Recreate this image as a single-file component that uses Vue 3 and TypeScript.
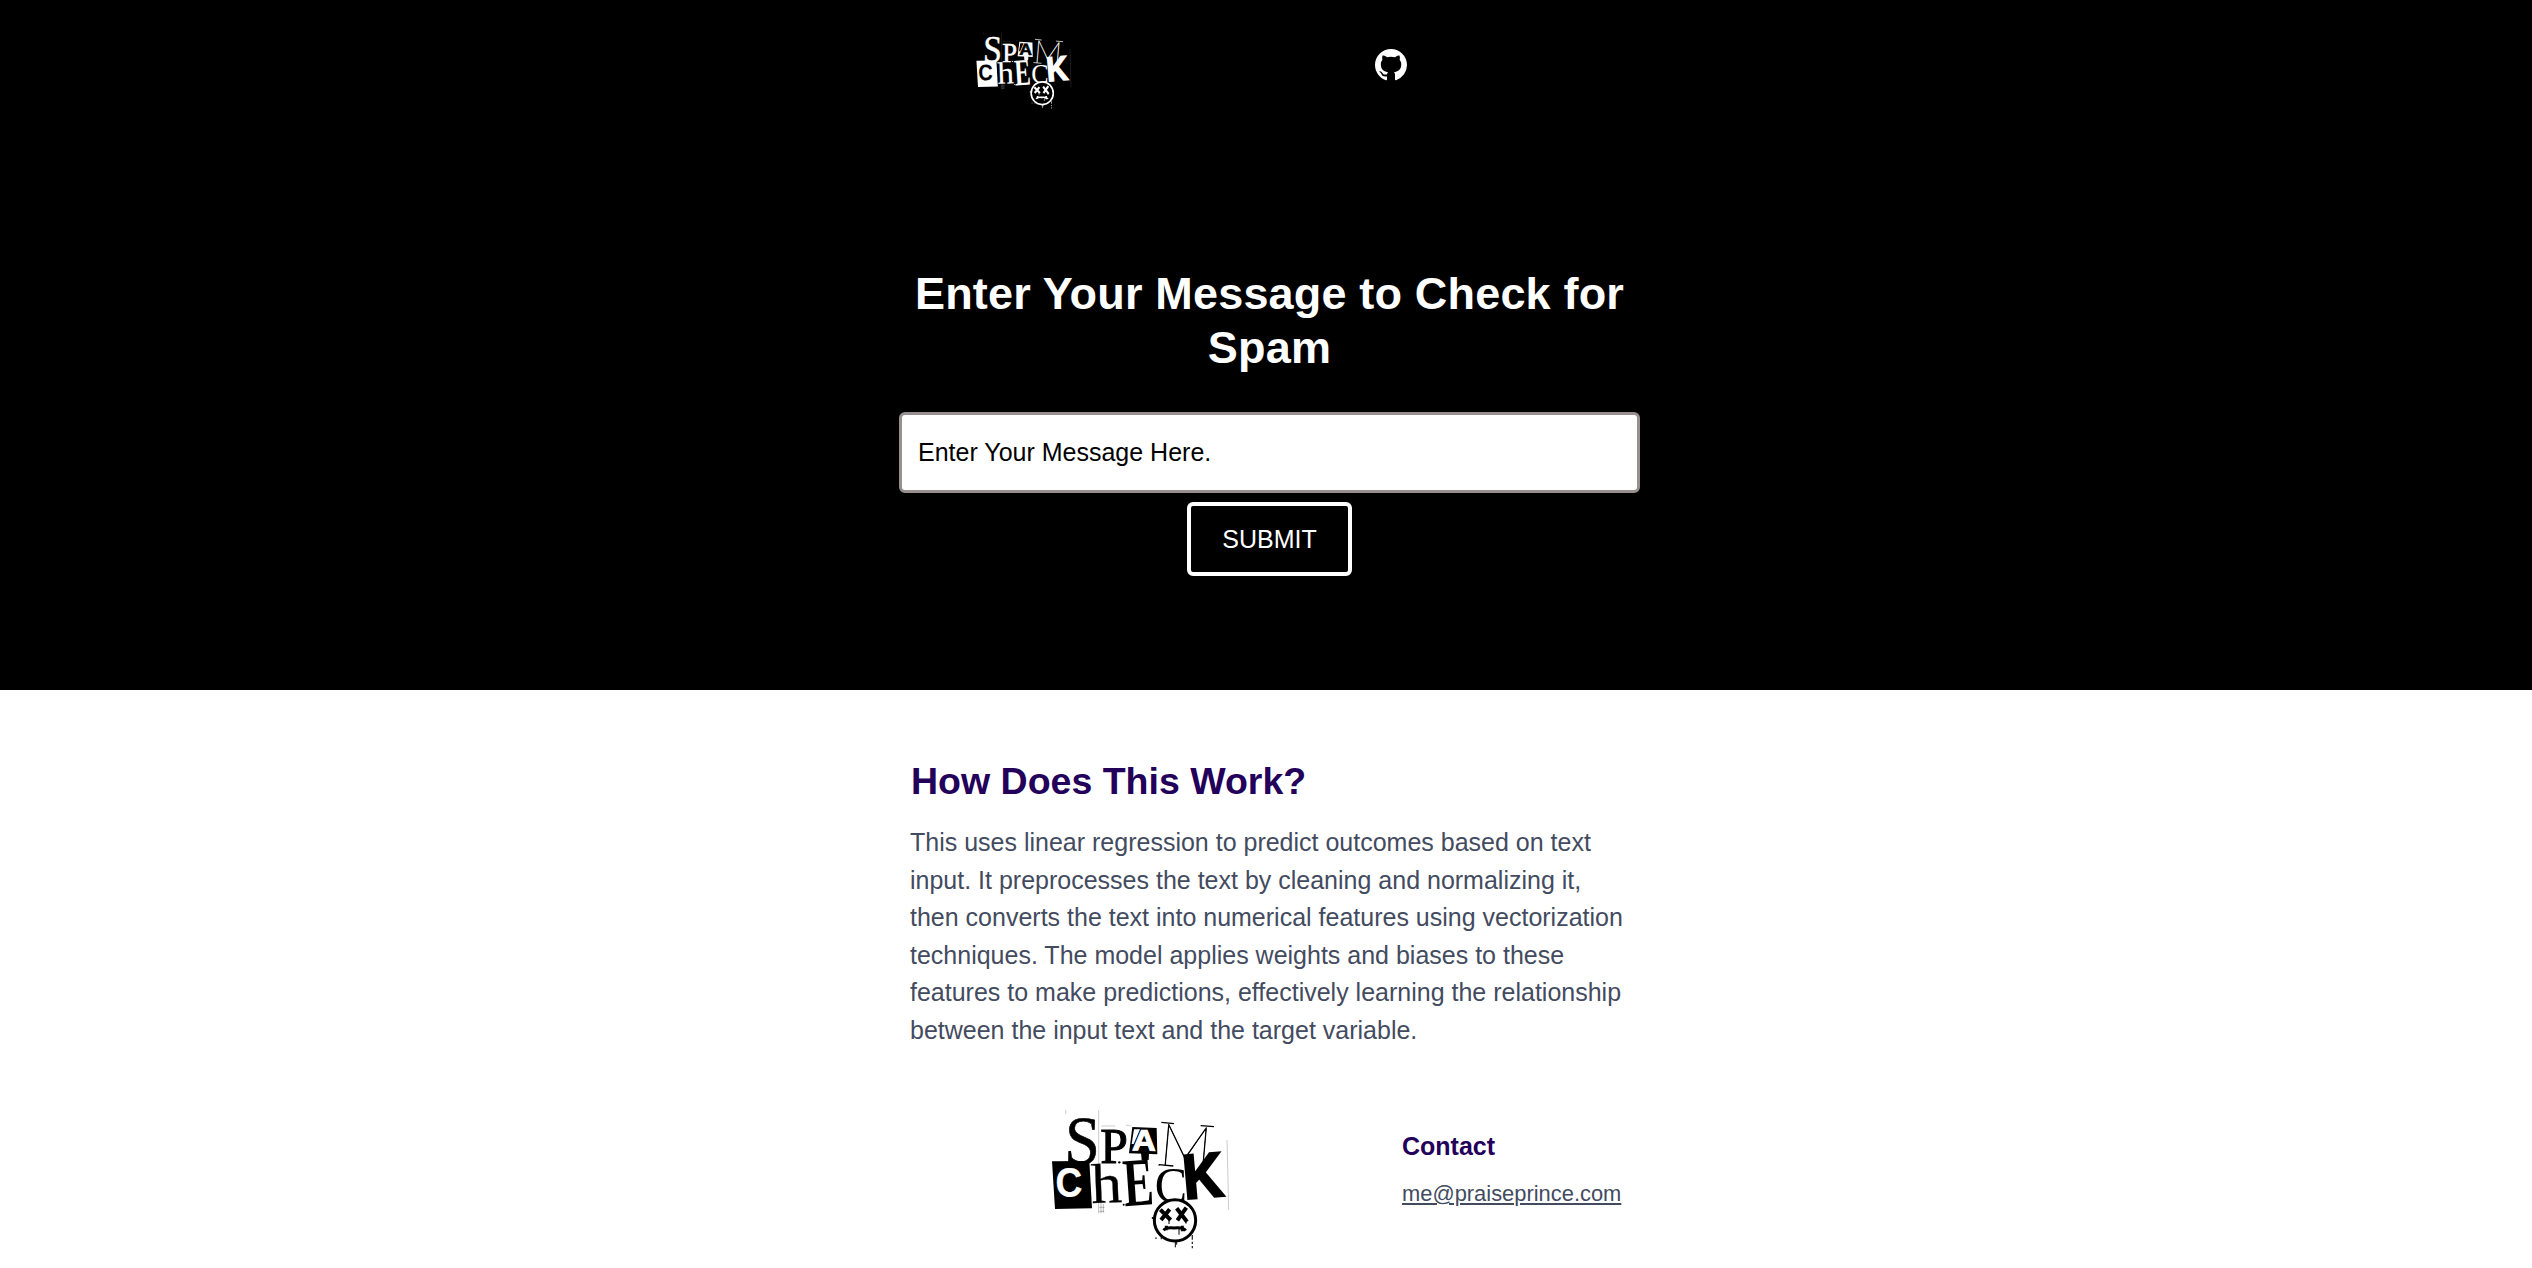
<script setup lang="ts">
import { defineComponent, h, ref } from 'vue'

interface Letter {
  char: string
  font: 'serif' | 'sans' | 'thin'
  size: number
  transform: string
  weight?: number
  tone?: 'ink' | 'paper'
  stroke?: number
}

const families: Record<Letter['font'], string> = {
  serif: 'Liberation Serif, serif',
  sans: 'Liberation Sans, sans-serif',
  thin: 'Lato, sans-serif',
}

const letters: Letter[] = [
  { char: 'S', font: 'serif', size: 207, transform: 'translate(72 190) rotate(2) scale(.92 1)', stroke: 2 },
  { char: 'P', font: 'serif', size: 152, transform: 'translate(181 190) scale(.98 1)', stroke: 3 },
  { char: 'M', font: 'thin', size: 174, transform: 'translate(355 193) rotate(5)', weight: 100, stroke: 2 },
  { char: 'h', font: 'serif', size: 168, transform: 'translate(155 309) rotate(-2) scale(1.1 1)', stroke: 1 },
  { char: 'E', font: 'serif', size: 205, transform: 'translate(254 319) rotate(-4) scale(.66 1)', weight: 700 },
  { char: 'C', font: 'serif', size: 150, transform: 'translate(344 306) scale(.97 1)' },
]

// Cut-out lettering and graffiti face; --ink and --paper set its two tones.
const SpamLogo = defineComponent({
  setup() {
    const glyph = (l: Letter) =>
      h('text', {
        transform: l.transform,
        'font-family': families[l.font],
        'font-size': l.size,
        'font-weight': l.weight ?? 400,
        fill: `var(--${l.tone ?? 'ink'})`,
        stroke: `var(--${l.tone ?? 'ink'})`,
        'stroke-width': l.stroke ?? 0,
      }, l.char)
    const line = (d: string, w: number, opacity = 1) =>
      h('path', { d, fill: 'none', stroke: 'var(--ink)', 'stroke-width': w, opacity })
    const block = (points: string) => h('polygon', { points, fill: 'var(--ink)' })
    return () =>
      h('svg', { viewBox: '0 0 600 480', preserveAspectRatio: 'none', role: 'img', 'aria-label': 'Spam Check' }, [
        line('M176 30V200M77 30V42M184 78H226M258 76H272M561 120L564 240L566 330', 1.5, 0.4),
        line('M176 306V340M183 308V340M190 312V338M178 322H194M178 334H193', 2, 0.4),
        ...letters.map(glyph),
        line('M364 67L402 71M482 77L522 80M357 194L400 198', 4),
        block('36,184 148,183 156,325 45,327'),
        glyph({ char: 'C', font: 'sans', size: 122, weight: 700, tone: 'paper', transform: 'translate(47 290) rotate(-1) scale(.91 1)', stroke: 1 }),
        block('277,81 350,84 352,163 267,160'),
        h('polygon', { points: '282,88 300,88 281,132 275,132', fill: 'var(--paper)' }),
        glyph({ char: 'A', font: 'sans', size: 88, weight: 700, tone: 'paper', transform: 'translate(276 151) rotate(1) scale(1.12 1)', stroke: 3 }),
        block('303,158 327,160 326,180 305,180'),
        glyph({ char: 'K', font: 'sans', size: 188, weight: 700, transform: 'translate(434 297) rotate(-5) scale(.88 1)', stroke: 8 }),
        h('circle', { cx: 405, cy: 361, r: 62, fill: 'var(--paper)', stroke: 'var(--ink)', 'stroke-width': 9 }),
        line('M361 329L392 360M389 328L363 360M410 325L441 365M439 323L412 361', 12),
        line('M371 391Q378 381 402 384Q430 381 437 392M379 377V391M427 377V394', 9),
        line('M417 387V404M406 424V442M410 424V434M387 360V372M438 362V371', 3),
        line('M457 405V419M457 425V432M457 438V445M348 412V417M364 410V418', 4, 0.8),
        h('g', { fill: 'var(--ink)' }, [
          h('circle', { cx: 238, cy: 187, r: 3.5 }),
          h('circle', { cx: 251, cy: 314, r: 3 }),
          h('circle', { cx: 338, cy: 354, r: 3 }),
          h('circle', { cx: 357, cy: 195, r: 2 }),
        ]),
      ])
  },
})

const message = ref('')
const explanation: string[] = [
  'This uses linear regression to predict outcomes based on text',
  'input. It preprocesses the text by cleaning and normalizing it,',
  'then converts the text into numerical features using vectorization',
  'techniques. The model applies weights and biases to these',
  'features to make predictions, effectively learning the relationship',
  'between the input text and the target variable.',
]
</script>

<template>
  <div class="page">
    <div class="hero">
      <header class="nav">
        <SpamLogo class="logo logo-small" />
        <a class="github" aria-label="GitHub">
          <svg viewBox="0 0 16 16" fill="currentColor">
            <path d="M8 0C3.58 0 0 3.58 0 8c0 3.54 2.29 6.53 5.47 7.59.4.07.55-.17.55-.38 0-.19-.01-.82-.01-1.49-2.01.37-2.53-.49-2.69-.94-.09-.23-.48-.94-.82-1.13-.28-.15-.68-.52-.01-.53.63-.01 1.08.58 1.23.82.72 1.21 1.87.87 2.33.66.07-.52.28-.87.51-1.07-1.78-.2-3.64-.89-3.64-3.95 0-.87.31-1.59.82-2.15-.08-.2-.36-1.02.08-2.12 0 0 .67-.21 2.2.82.64-.18 1.32-.27 2-.27s1.36.09 2 .27c1.53-1.04 2.2-.82 2.2-.82.44 1.1.16 1.92.08 2.12.51.56.82 1.27.82 2.15 0 3.07-1.87 3.75-3.65 3.95.29.25.54.73.54 1.48 0 1.07-.01 1.93-.01 2.2 0 .21.15.46.55.38A8.01 8.01 0 0 0 16 8c0-4.42-3.58-8-8-8z" />
          </svg>
        </a>
      </header>
      <main class="checker">
        <h1>Enter Your Message to Check for<br />Spam</h1>
        <form @submit.prevent>
          <input v-model="message" type="text" placeholder="Enter Your Message Here." />
          <button type="submit">SUBMIT</button>
        </form>
      </main>
    </div>
    <section class="about">
      <h2>How Does This Work?</h2>
      <p><span v-for="row in explanation" :key="row">{{ row }}</span></p>
    </section>
    <footer class="footer">
      <SpamLogo class="logo logo-large" />
      <div class="contact">
        <h3>Contact</h3>
        <a>me@praiseprince.com</a>
      </div>
    </footer>
  </div>
</template>

<style>
body {
  margin: 0;
  background: #fff;
}
</style>

<style scoped>
.page {
  height: 1268px;
  overflow: hidden;
  font-family: "Liberation Sans", Arial, sans-serif;
  color: #434b5f;
}
.hero {
  box-sizing: border-box;
  height: 690px;
  background: #000;
  color: #fff;
}
.nav {
  display: flex;
  align-items: flex-start;
  width: 741px;
  height: 267px;
  margin: 0 auto;
  padding-left: 7px;
  box-sizing: border-box;
}
.logo {
  display: block;
  flex: none;
}
.logo-small {
  --ink: #fff;
  --paper: #000;
  width: 107px;
  height: 88px;
  margin: 27px 0 0 67px;
}
.github {
  width: 32px;
  height: 32px;
  margin: 49px 0 0 298px;
}
.github svg {
  display: block;
  width: 32px;
  height: 32px;
}
.checker {
  width: 741px;
  margin: 0 auto;
  padding-left: 7px;
}
h1 {
  margin: 0;
  font-size: 45px;
  line-height: 54px;
  letter-spacing: 0.18px;
  text-align: center;
  white-space: nowrap;
}
form {
  display: flex;
  flex-direction: column;
  align-items: center;
  margin-top: 37px;
}
input {
  box-sizing: border-box;
  width: 741px;
  height: 81px;
  padding: 0 16px;
  border: 3px solid #989090;
  border-radius: 6px;
  background: #fff;
  font: 25px "Liberation Sans", Arial, sans-serif;
  outline: none;
}
input::placeholder {
  color: #000;
  opacity: 1;
}
button {
  box-sizing: border-box;
  width: 165px;
  height: 74px;
  margin-top: 9px;
  padding: 0;
  border: 4px solid #fff;
  border-radius: 6px;
  background: #000;
  color: #fff;
  font: 25px "Liberation Sans", Arial, sans-serif;
}
.about {
  width: 711px;
  margin: 0 auto;
  padding: 69px 0 0 1px;
}
h2 {
  margin: 0;
  color: #23005a;
  font-size: 37.5px;
  line-height: 45px;
}
p {
  display: flex;
  flex-direction: column;
  margin: 20px 0 0 -1px;
  font-size: 25px;
  line-height: 37.5px;
  white-space: nowrap;
}
.footer {
  display: flex;
  width: 712px;
  margin: 0 auto;
  padding-left: 260px;
  box-sizing: border-box;
}
.logo-large {
  --ink: #000;
  --paper: #fff;
  width: 200px;
  height: 160px;
  margin: 51px 0 0 -130px;
}
.contact {
  margin: 83px 0 0 162px;
}
h3 {
  margin: 0 0 20px;
  color: #23005a;
  font-size: 25px;
  line-height: 29px;
}
.contact a {
  font-size: 21.9px;
  line-height: 26px;
  text-decoration: underline;
}
</style>
